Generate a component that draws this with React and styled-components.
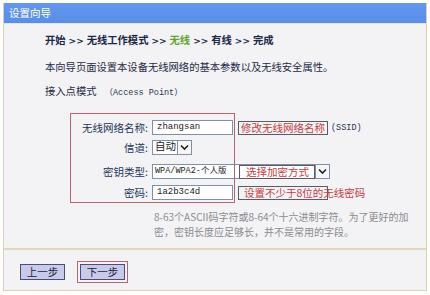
import React from "react";
import styled, { createGlobalStyle } from "styled-components";

const Global = createGlobalStyle`
  html, body { margin: 0; padding: 0; background: #ffffff; }
  body { font-family: "Noto Sans CJK SC", "Noto Sans", sans-serif; }
`;

const Frame = styled.div`
  margin: 3px 0 0 3px;
  width: 424px;
  height: 288px;
  box-sizing: border-box;
  border: 1px solid #dcd0ae;
  border-top: none;
  background: #f3f3f5;
  display: flex;
  flex-direction: column;
`;

const Header = styled.div`
  height: 20px;
  background: linear-gradient(#6396ec, #5a8de6);
  border-bottom: 1px solid #dfe6f2;
  color: #ffffff;
  font-size: 10.5px;
  line-height: 20px;
  padding-left: 5px;
`;

const Body = styled.div`
  height: 224px;
  padding-left: 41px;
  display: flex;
  flex-direction: column;
  color: #1f2a44;
`;

const Crumbs = styled.div`
  margin-top: 8px;
  height: 16px;
  line-height: 16px;
  font-size: 10.3px;
  font-weight: 700;
  color: #1d2847;
  white-space: nowrap;
`;

const Sep = styled.span`
  font-family: "DejaVu Sans", sans-serif;
  font-size: 9px;
  margin: 0 3px;
`;

const Current = styled.span`
  color: #62a531;
`;

const Line = styled.div`
  margin-top: ${(p) => p.$mt}px;
  height: 16px;
  line-height: 16px;
  font-size: 10.3px;
  white-space: nowrap;
`;

const Mono = styled.span`
  font-family: "Liberation Mono", "Noto Sans CJK SC", monospace;
  font-size: 8.5px;
  color: #2a3350;
  margin-left: ${(p) => p.$ml}px;
`;

const Form = styled.div`
  position: relative;
  margin-top: 14px;
  margin-left: 25px;
  height: 90px;
  display: flex;
  flex-direction: column;
`;

const Outline = styled.div`
  position: absolute;
  left: 0;
  top: 0;
  width: 165px;
  height: 90px;
  box-sizing: border-box;
  border: 1.5px solid #b56472;
  pointer-events: none;
`;

const Row = styled.div`
  margin-top: ${(p) => p.$mt}px;
  height: 17px;
  display: flex;
  align-items: center;
`;

const Label = styled.div`
  width: 78px;
  text-align: right;
  font-size: 10.5px;
  color: #24335a;
  white-space: nowrap;
  margin-right: 4px;
`;

const Field = styled.div`
  width: ${(p) => p.$w}px;
  height: 15px;
  box-sizing: border-box;
  border: 1px solid #7f8fa8;
  background: #ffffff;
  font-family: "Liberation Mono", "Noto Sans CJK SC", monospace;
  font-size: 9px;
  line-height: 13px;
  padding-left: 4px;
  color: #1a1a1a;
  white-space: nowrap;
  overflow: hidden;
`;

const Select = styled.div`
  height: 15px;
  box-sizing: border-box;
  border: 1px solid #7f8fa8;
  background: #ffffff;
  display: flex;
  align-items: stretch;
`;

const SelectText = styled.div`
  width: ${(p) => p.$w}px;
  font-family: "Liberation Mono", "Noto Sans CJK SC", monospace;
  font-size: ${(p) => p.$fs}px;
  line-height: 13px;
  padding-left: 2px;
  color: #1a1a1a;
  white-space: nowrap;
  overflow: hidden;
`;

const Arrow = styled.div`
  width: 14px;
  box-sizing: border-box;
  border-left: 1px solid #7f8fa8;
  display: flex;
  align-items: center;
  justify-content: center;
  background: #f6f6f6;
`;

const Note = styled.span`
  margin-left: ${(p) => p.$ml}px;
  width: ${(p) => p.$w}px;
  height: 14px;
  box-sizing: border-box;
  border: 1px solid #5a5a66;
  color: #c63b3f;
  font-size: 10.5px;
  line-height: 12px;
  padding-left: ${(p) => p.$pl}px;
  white-space: nowrap;
  overflow: visible;
  display: inline-block;
`;

const Hint = styled.div`
  margin-top: 6px;
  margin-left: 109px;
  width: 258px;
  font-size: 10px;
  line-height: 15px;
  color: #8b8b8f;
`;

const Footer = styled.div`
  border-top: 2px solid #e3d8bd;
  flex: 1;
  display: flex;
  align-items: center;
  gap: 15px;
  padding-left: 16px;
  padding-top: 3px;
`;

const Button = styled.div`
  width: 45px;
  height: 16px;
  box-sizing: border-box;
  border: 1px solid #4b4b7c;
  background: #c9c9ea;
  font-size: 10.5px;
  line-height: 14px;
  text-align: center;
  color: #1d1d3a;
  outline: ${(p) => (p.$marked ? "1.5px solid #b56472" : "none")};
  outline-offset: 2px;
`;

const Chevron = () => (
  <svg width="9" height="7" viewBox="0 0 9 7">
    <path d="M1 1.5 L4.5 5 L8 1.5" fill="none" stroke="#222" strokeWidth="1.6" />
  </svg>
);

export default function App() {
  return (
    <>
      <Global />
      <Frame>
        <Header>设置向导</Header>
        <Body>
          <Crumbs>
            开始<Sep>&gt;&gt;</Sep>无线工作模式<Sep>&gt;&gt;</Sep>
            <Current>无线</Current>
            <Sep>&gt;&gt;</Sep>有线<Sep>&gt;&gt;</Sep>完成
          </Crumbs>
          <Line $mt={11}>本向导页面设置本设备无线网络的基本参数以及无线安全属性。</Line>
          <Line $mt={8}>
            接入点模式<Mono $ml={8}>（Access Point）</Mono>
          </Line>
          <Form>
            <Outline />
            <Row $mt={6}>
              <Label>无线网络名称:</Label>
              <Field $w={81}>zhangsan</Field>
              <Note $ml={5} $w={90} $pl={2}>修改无线网络名称</Note>
              <Mono $ml={3}>(SSID)</Mono>
            </Row>
            <Row $mt={3}>
              <Label>信道:</Label>
              <Select>
                <SelectText $w={22} $fs={10.5}>自动</SelectText>
                <Arrow>
                  <Chevron />
                </Arrow>
              </Select>
            </Row>
            <Row $mt={7}>
              <Label>密钥类型:</Label>
              <Select>
                <SelectText $w={82} $fs={8.5}>WPA/WPA2-个人版</SelectText>
                <Note $ml={2} $w={76} $pl={6}>选择加密方式</Note>
                <Arrow>
                  <Chevron />
                </Arrow>
              </Select>
            </Row>
            <Row $mt={4}>
              <Label>密码:</Label>
              <Field $w={81}>1a2b3c4d</Field>
              <Note $ml={5} $w={90} $pl={5}>设置不少于8位的无线密码</Note>
            </Row>
          </Form>
          <Hint>
            8-63个ASCII码字符或8-64个十六进制字符。为了更好的加密，密钥长度应足够长，并不是常用的字段。
          </Hint>
        </Body>
        <Footer>
          <Button>上一步</Button>
          <Button $marked>下一步</Button>
        </Footer>
      </Frame>
    </>
  );
}
